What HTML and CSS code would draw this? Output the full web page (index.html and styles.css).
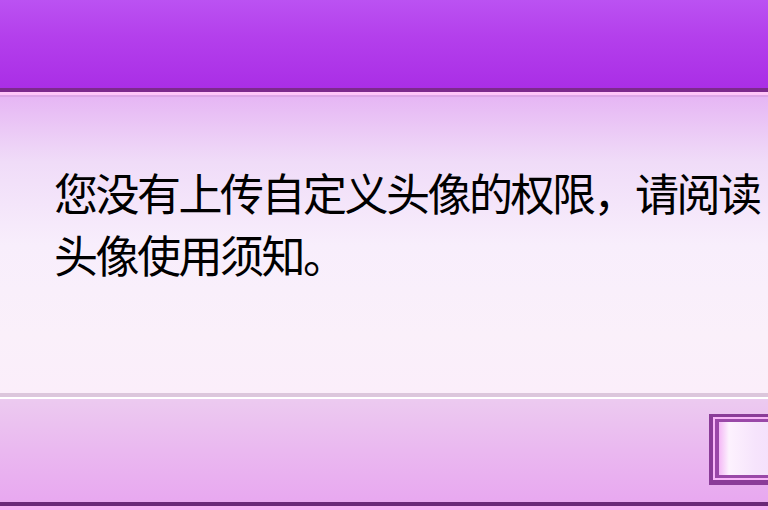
FILE: index.html
```html
<!DOCTYPE html>
<html lang="zh-CN">
<head>
<meta charset="utf-8">
<title>提示</title>
<link rel="stylesheet" href="styles.css">
</head>
<body>
<div class="window">
  <div class="titlebar"></div>
  <div class="title-edge"></div>
  <div class="content">
    <p class="message">您没有上传自定义头像的权限，请阅读头像使用须知。</p>
  </div>
  <div class="footer">
    <button class="btn" type="button"><span class="btn-inner"></span></button>
  </div>
  <div class="bottom-edge"></div>
</div>
</body>
</html>
```
FILE: styles.css
```css
html, body {
  margin: 0;
  padding: 0;
}
body {
  width: 768px;
  height: 510px;
  overflow: hidden;
  font-family: "Noto Sans CJK SC", "Noto Sans", sans-serif;
}
.window {
  display: flex;
  flex-direction: column;
  width: 768px;
  height: 510px;
}
.titlebar {
  height: 88px;
  flex: none;
  background: linear-gradient(to bottom, #bb52f2 0%, #b440ec 40%, #aa2ee6 100%);
}
.title-edge {
  flex: none;
  height: 3px;
  border-top: 4px solid #7c2a8c;
  border-bottom: 2px solid #dca6e6;
  background: #ffc6f8;
}
.content {
  flex: 1;
  padding: 64px 0 0 54px;
  background: linear-gradient(to bottom, #e6b6f4 0%, #f0dcf8 22%, #f8eefc 50%, #faf0fa 80%, #fbeefa 100%);
  border-bottom: 4px solid #dcc6dc;
}
.message {
  margin: 0;
  width: 712px;
  font-size: 44px;
  font-weight: 400;
  letter-spacing: -2.5px;
  line-height: 62px;
  color: #000;
}
.footer {
  flex: none;
  height: 88px;
  padding-top: 15px;
  border-top: 2px solid #fff;
  display: flex;
  justify-content: flex-end;
  align-items: flex-start;
  overflow: hidden;
  background: linear-gradient(to bottom, #eccaf0 0%, #eab8f0 50%, #e8a8f0 100%);
}
.btn {
  flex: none;
  width: 110px;
  height: 71px;
  margin: 0 -51px 0 0;
  padding: 2px;
  border: 4px solid #8a3c98;
  border-top-width: 3px;
  border-bottom-width: 5px;
  background: #f8b6f8;
  display: flex;
}
.btn-inner {
  flex: 1;
  border: 4px solid #9a48a8;
  border-top-width: 3px;
  border-bottom-width: 3px;
  background: linear-gradient(to right, #f4b8f6 0px, #fdf2fe 10px, #f6e4fc 40%, #f0d8fa 100%);
}
.bottom-edge {
  flex: none;
  height: 4px;
  border-top: 4px solid #6a2878;
  background: #f6b4f4;
}
```
